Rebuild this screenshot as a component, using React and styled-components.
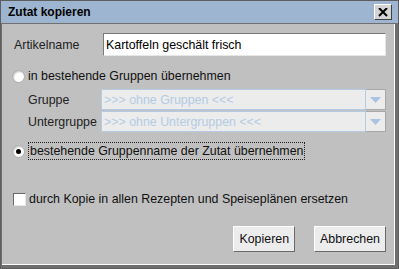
import React from 'react'
import styled, { createGlobalStyle } from 'styled-components'

const GlobalStyle = createGlobalStyle`
  html, body {
    margin: 0;
    padding: 0;
    background: #c0c0c0;
  }
  * {
    box-sizing: border-box;
  }
`

const App = () => {
  return (
    <>
      <GlobalStyle />
      <Frame>
        <TitleBar>
          <Title>Zutat kopieren</Title>
          <CloseButton>
            <svg width='10' height='9' viewBox='0 0 10 9'>
              <path d='M1 0 L9 8 M9 0 L1 8' stroke='#000' strokeWidth='2' />
            </svg>
          </CloseButton>
        </TitleBar>
        <Body>
          <NameRow>
            <Label>Artikelname</Label>
            <TextInput defaultValue='Kartoffeln geschält frisch' />
          </NameRow>

          <OptionRow $top={13}>
            <Radio />
            <OptionText>in bestehende Gruppen übernehmen</OptionText>
          </OptionRow>

          <GroupGrid>
            <GroupLabel>Gruppe</GroupLabel>
            <Combo>
              <ComboText>&gt;&gt;&gt; ohne Gruppen &lt;&lt;&lt;</ComboText>
              <ComboArrow>
                <svg width='11' height='6' viewBox='0 0 11 6'>
                  <path d='M0 0 H11 L5.5 6 Z' fill='#a9c3e0' />
                </svg>
              </ComboArrow>
            </Combo>
            <GroupLabel>Untergruppe</GroupLabel>
            <Combo>
              <ComboText>&gt;&gt;&gt; ohne Untergruppen &lt;&lt;&lt;</ComboText>
              <ComboArrow>
                <svg width='11' height='6' viewBox='0 0 11 6'>
                  <path d='M0 0 H11 L5.5 6 Z' fill='#a9c3e0' />
                </svg>
              </ComboArrow>
            </Combo>
          </GroupGrid>

          <OptionRow $top={10}>
            <Radio $checked />
            <FocusText>bestehende Gruppenname der Zutat übernehmen</FocusText>
          </OptionRow>

          <OptionRow $top={32}>
            <Checkbox />
            <OptionText>durch Kopie in allen Rezepten und Speiseplänen ersetzen</OptionText>
          </OptionRow>

          <ButtonRow>
            <Button>Kopieren</Button>
            <Button>Abbrechen</Button>
          </ButtonRow>
        </Body>
      </Frame>
    </>
  )
}

export default App

const Frame = styled.div`
  width: 399px;
  height: 269px;
  display: flex;
  flex-direction: column;
  border: 1px solid #5e5e5e;
  font-family: 'Liberation Sans', Arial, sans-serif;
  font-size: 12.4px;
  color: #000;
`

const TitleBar = styled.div`
  height: 23px;
  flex: none;
  display: flex;
  align-items: center;
  justify-content: space-between;
  padding: 0 6px 0 7px;
  background: #9db5d1;
  border-bottom: 1px solid #707070;
`

const Title = styled.span`
  font-weight: bold;
  font-size: 12px;
`

const CloseButton = styled.div`
  width: 18px;
  height: 16px;
  display: flex;
  align-items: center;
  justify-content: center;
  background: #d4d4d4;
  border: 1px solid;
  border-color: #fff #404040 #404040 #fff;
`

const Body = styled.div`
  flex: 1;
  display: flex;
  flex-direction: column;
  padding: 9px 9px 0 10px;
  background: #c0c0c0;
  border-left: 1px solid #6e6e6e;
  border-right: 3px solid #6e6e6e;
  border-bottom: 3px solid #6e6e6e;
  box-shadow: inset -1px -1px 0 #fff;
`

const NameRow = styled.div`
  display: flex;
  align-items: center;
`

const Label = styled.span`
  width: 91px;
  padding-left: 2px;
  color: #222;
`

const TextInput = styled.input`
  flex: 1;
  height: 23px;
  padding: 0 2px;
  font: inherit;
  color: #000;
  background: #fff;
  border: 1px solid;
  border-color: #7a7a7a #e6e6e6 #e6e6e6 #7a7a7a;
  outline: none;
`

const OptionRow = styled.div`
  display: flex;
  align-items: center;
  gap: 3px;
  margin-top: ${props => props.$top}px;
`

const Radio = styled.span`
  position: relative;
  width: 13px;
  height: 13px;
  border-radius: 50%;
  background: radial-gradient(circle at 60% 60%, #fff 45%, #c8c8c8 75%, #9a9a9a 100%);
  border: 1px solid #b0b0b0;
  &::after {
    content: '';
    display: ${props => (props.$checked ? 'block' : 'none')};
    position: absolute;
    left: 3px;
    top: 3px;
    width: 5px;
    height: 5px;
    border-radius: 50%;
    background: #000;
  }
`

const Checkbox = styled.span`
  width: 13px;
  height: 13px;
  margin-left: 1px;
  background: #fff;
  border: 1px solid;
  border-color: #6a6a6a #e8e8e8 #e8e8e8 #6a6a6a;
`

const OptionText = styled.span`
  color: #111;
`

const FocusText = styled.span`
  color: #111;
  padding: 1px 1px;
  border: 1px dotted #222;
`

const GroupGrid = styled.div`
  display: grid;
  grid-template-columns: 73px 1fr;
  row-gap: 1px;
  align-items: center;
  margin-top: 6px;
  padding-left: 16px;
`

const GroupLabel = styled.span`
  color: #222;
`

const Combo = styled.div`
  display: flex;
  height: 21px;
`

const ComboText = styled.div`
  flex: 1;
  display: flex;
  align-items: center;
  padding-left: 2px;
  color: #b4cbe3;
  background: #ececec;
  border: 1px solid #b4cbe3;
`

const ComboArrow = styled.div`
  width: 20px;
  display: flex;
  align-items: center;
  justify-content: center;
  background: #ececec;
  border: 1px solid #a8a8a8;
  border-left: none;
`

const ButtonRow = styled.div`
  display: flex;
  justify-content: flex-end;
  gap: 19px;
  margin-top: auto;
  margin-bottom: 13px;
`

const Button = styled.div`
  height: 26px;
  display: flex;
  align-items: center;
  padding: 0 5px;
  background: #ececec;
  color: #111;
  border: 1px solid;
  border-color: #fff #6a6a6a #6a6a6a #fff;
`
